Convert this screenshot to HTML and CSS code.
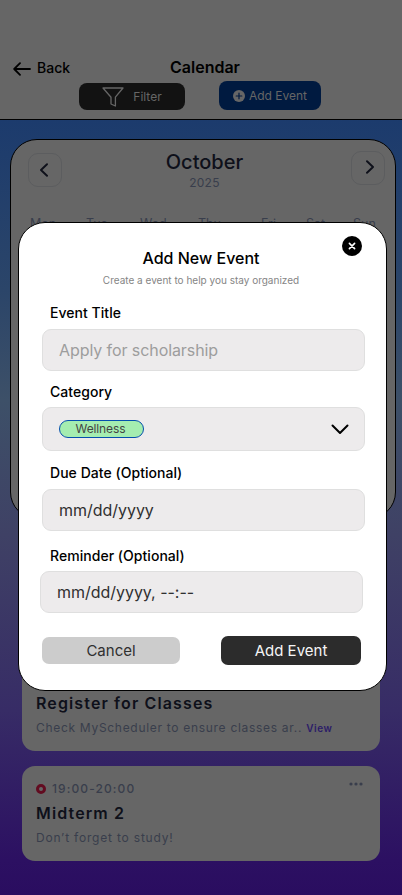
FILE: index.html
```html
<!DOCTYPE html>
<html lang="en">
<head>
<meta charset="utf-8">
<meta name="viewport" content="width=device-width, initial-scale=1">
<title>Calendar</title>
<link rel="stylesheet" href="styles.css">
</head>
<body>
<div class="screen">
  <header class="header">
    <div class="title-row">
      <a class="back"><svg width="18" height="14" viewBox="0 0 18 14"><path d="M17 7H1.4M7 1.2L1.2 7L7 12.8" fill="none" stroke="#000" stroke-width="1.8" stroke-linecap="round" stroke-linejoin="round"/></svg><span>Back</span></a>
      <h1>Calendar</h1>
    </div>
    <div class="actions">
      <button class="filter"><svg width="22" height="20" viewBox="0 0 22 20"><path d="M1 1H21L13.4 10.2V19L9 17V10.2Z" fill="none" stroke="#666" stroke-width="1.3" stroke-linejoin="round"/></svg><span>Filter</span></button>
      <button class="add"><svg width="12" height="12" viewBox="0 0 12 12"><circle cx="6" cy="6" r="6" fill="#666"/><path d="M6 3.2V8.8M3.2 6H8.8" stroke="#001a40" stroke-width="1.2" stroke-linecap="round"/></svg><span>Add Event</span></button>
    </div>
  </header>
  <main>
    <section class="calendar">
      <div class="month-row">
        <button class="nav prev"><svg width="10" height="14" viewBox="0 0 10 14"><path d="M8 1.2L2 7L8 12.8" fill="none" stroke="#0e101a" stroke-width="1.9" stroke-linecap="round" stroke-linejoin="round"/></svg></button>
        <div class="month"><h2>October</h2><p>2025</p></div>
        <button class="nav next"><svg width="10" height="14" viewBox="0 0 10 14"><path d="M2 1.2L8 7L2 12.8" fill="none" stroke="#0e101a" stroke-width="1.9" stroke-linecap="round" stroke-linejoin="round"/></svg></button>
      </div>
      <div class="days"><span>Mon</span><span>Tue</span><span>Wed</span><span>Thu</span><span>Fri</span><span>Sat</span><span>Sun</span></div>
    </section>
    <section class="tasks">
      <article class="task">
        <div class="task-time"></div>
        <h3>Register for Classes</h3>
        <p>Check MyScheduler to ensure classes ar.. <b>View</b></p>
      </article>
      <article class="task">
        <div class="task-time"><i class="ring"></i><span class="hours">19:00-20:00</span><svg class="more" width="14" height="4" viewBox="0 0 14 4"><g fill="#393e4c"><circle cx="2" cy="2" r="1.6"/><circle cx="7" cy="2" r="1.6"/><circle cx="12" cy="2" r="1.6"/></g></svg></div>
        <h3>Midterm 2</h3>
        <p class="wide">Don’t forget to study!</p>
      </article>
    </section>
  </main>
  <form class="modal">
    <button type="button" class="close"><svg width="20" height="20" viewBox="0 0 20 20"><circle cx="10" cy="10" r="10" fill="#000"/><path d="M7.4 7.4L12.6 12.6M12.6 7.4L7.4 12.6" stroke="#fff" stroke-width="1.6" stroke-linecap="round"/></svg></button>
    <h2>Add New Event</h2>
    <p class="hint">Create a event to help you stay organized</p>
    <div class="group"><label>Event Title</label><div class="field placeholder">Apply for scholarship</div></div>
    <div class="group category"><label>Category</label><div class="field select"><span class="chip">Wellness</span><svg width="18" height="11" viewBox="0 0 18 11"><path d="M1.5 1.5L9 9L16.5 1.5" fill="none" stroke="#000" stroke-width="2" stroke-linecap="round" stroke-linejoin="round"/></svg></div></div>
    <div class="group due"><label>Due Date (Optional)</label><div class="field">mm/dd/yyyy</div></div>
    <div class="group reminder"><label>Reminder (Optional)</label><div class="field">mm/dd/yyyy, --:--</div></div>
    <div class="buttons"><button type="button" class="cancel">Cancel</button><button type="button" class="submit">Add Event</button></div>
  </form>
</div>
</body>
</html>
```
FILE: styles.css
```css
* { box-sizing: border-box; margin: 0; padding: 0; }
body { font-family: Inter, sans-serif; color: #000; }
button { font-family: inherit; border: 0; background: none; display: flex; align-items: center; justify-content: center; }
svg { display: block; flex: none; }
.screen {
  position: relative; width: 402px; height: 895px; overflow: hidden;
  background: linear-gradient(180deg, #1c3b6d 120px, #2b4569 290px, #3d5068 400px, #3f4165 535px, #372c66 710px, #2c1062 860px, #2a0d60 895px);
}
.header { height: 120px; padding-top: 55px; background: #666; border-bottom: 1px solid #000; }
.title-row { display: grid; grid-template-columns: 1fr auto 1fr; align-items: center; height: 24px; padding: 0 5px 0 13px; }
.back { display: flex; align-items: center; gap: 6px; padding-top: 1px; font-size: 14px; font-weight: 500; }
.back svg { margin-top: 2px; }
h1 { font-size: 16px; font-weight: 600; line-height: 24px; }
.actions { display: flex; justify-content: space-between; padding: 2px 81px 0 79px; }
.filter { width: 106px; height: 27px; margin-top: 2px; border-radius: 8px; background: #121212; color: #666; font-size: 12px; gap: 9px; }
.add { width: 102px; height: 29px; border-radius: 8px; background: #001a40; color: #666; font-size: 12px; gap: 4px; }
.calendar { width: 386px; height: 380px; margin: 19px 0 0 10px; border: 1px solid #000; border-radius: 27px; background: #666; padding: 12px 10px 0 17px; }
.month-row { display: flex; justify-content: space-between; }
.nav { width: 34px; height: 34px; border: 1px solid #5c5d5f; border-radius: 10px; }
.prev { margin-top: 1px; }
.prev svg { margin-right: 3px; }
.next { margin-top: -1px; }
.next svg { margin-left: 4px; margin-bottom: 3px; }
.month { text-align: center; color: #0e101a; padding-right: 4px; }
.month h2 { font-size: 20px; line-height: 24px; font-weight: 500; margin-top: -2px; }
.month p { font-size: 12px; line-height: 16px; color: #393e4c; letter-spacing: .2px; margin-top: 1px; }
.days { display: grid; grid-template-columns: 56px 54px 58px 63px 45px 47px 26px; margin: 23px 0 0 2px; color: #393e4c; font-size: 12.5px; line-height: 20px; }
.tasks { display: grid; gap: 15px; padding: 137px 22px 0; width: 402px; }
.task { width: 358px; height: 95px; border-radius: 13px; background: #666; padding: 14px 14px 0; }
.task-time { height: 17px; display: flex; align-items: center; color: #393e4c; font-size: 12px; letter-spacing: 1.1px; font-weight: 500; }
.ring { width: 10px; height: 10px; border: 3px solid #620b20; border-radius: 50%; margin-right: 6px; }
.more { margin: -10px 3px 0 auto; }
.task h3 { font-size: 16px; font-weight: 600; line-height: 24px; letter-spacing: 1.12px; color: #0e101a; margin-top: 4px; }
.task p { font-size: 12px; line-height: 16px; letter-spacing: .7px; color: #393e4c; margin-top: 5px; }
.task .wide { letter-spacing: .8px; }
.task b { font-size: 10px; font-weight: 600; letter-spacing: .6px; color: #2c1c68; }
.modal { position: absolute; left: 18px; top: 222px; width: 369px; height: 469px; border: 1px solid #000; border-radius: 27px; background: #fff; padding: 24px 22px 0 23px; }
.close { position: absolute; right: 24px; top: 13px; }
.modal h2 { font-size: 16px; font-weight: 500; line-height: 22px; text-align: center; padding-right: 4px; }
.hint { font-size: 10px; line-height: 14px; color: #858585; text-align: center; margin-top: 4px; padding-right: 4px; }
.group { margin-top: 16px; }
.group label { display: block; padding-left: 8px; font-size: 14px; font-weight: 500; line-height: 20px; letter-spacing: .04px; }
.field { width: 323px; height: 42px; margin-top: 6px; border: 1px solid #dfdfdf; border-radius: 9px; background: #edebec; padding: 0 16px; display: flex; align-items: center; font-size: 16px; color: #303030; letter-spacing: -.03px; }
.placeholder { color: #9d9d9d; letter-spacing: -.08px; }
.category { margin-top: 11px; }
.select { height: 44px; margin-top: 5px; justify-content: space-between; padding-right: 15px; }
.chip { width: 85px; height: 18px; border: 1px solid #0550ad; border-radius: 9px; background: #a5edb0; font-size: 12px; line-height: 16px; text-align: center; color: #444; letter-spacing: -.12px; padding-right: 2px; }
.due { margin-top: 12px; }
.reminder { margin-top: 15px; }
.reminder .field { margin-left: -2px; margin-top: 5px; }
.buttons { display: flex; justify-content: space-between; align-items: center; margin-top: 23px; padding-right: 3px; }
.buttons button { font-size: 15px; border-radius: 7px; }
.cancel { width: 138px; height: 27px; background: #ccc; color: #303030; }
.submit { width: 140px; height: 29px; background: #2c2c2c; color: #f5f5f5; }
```
